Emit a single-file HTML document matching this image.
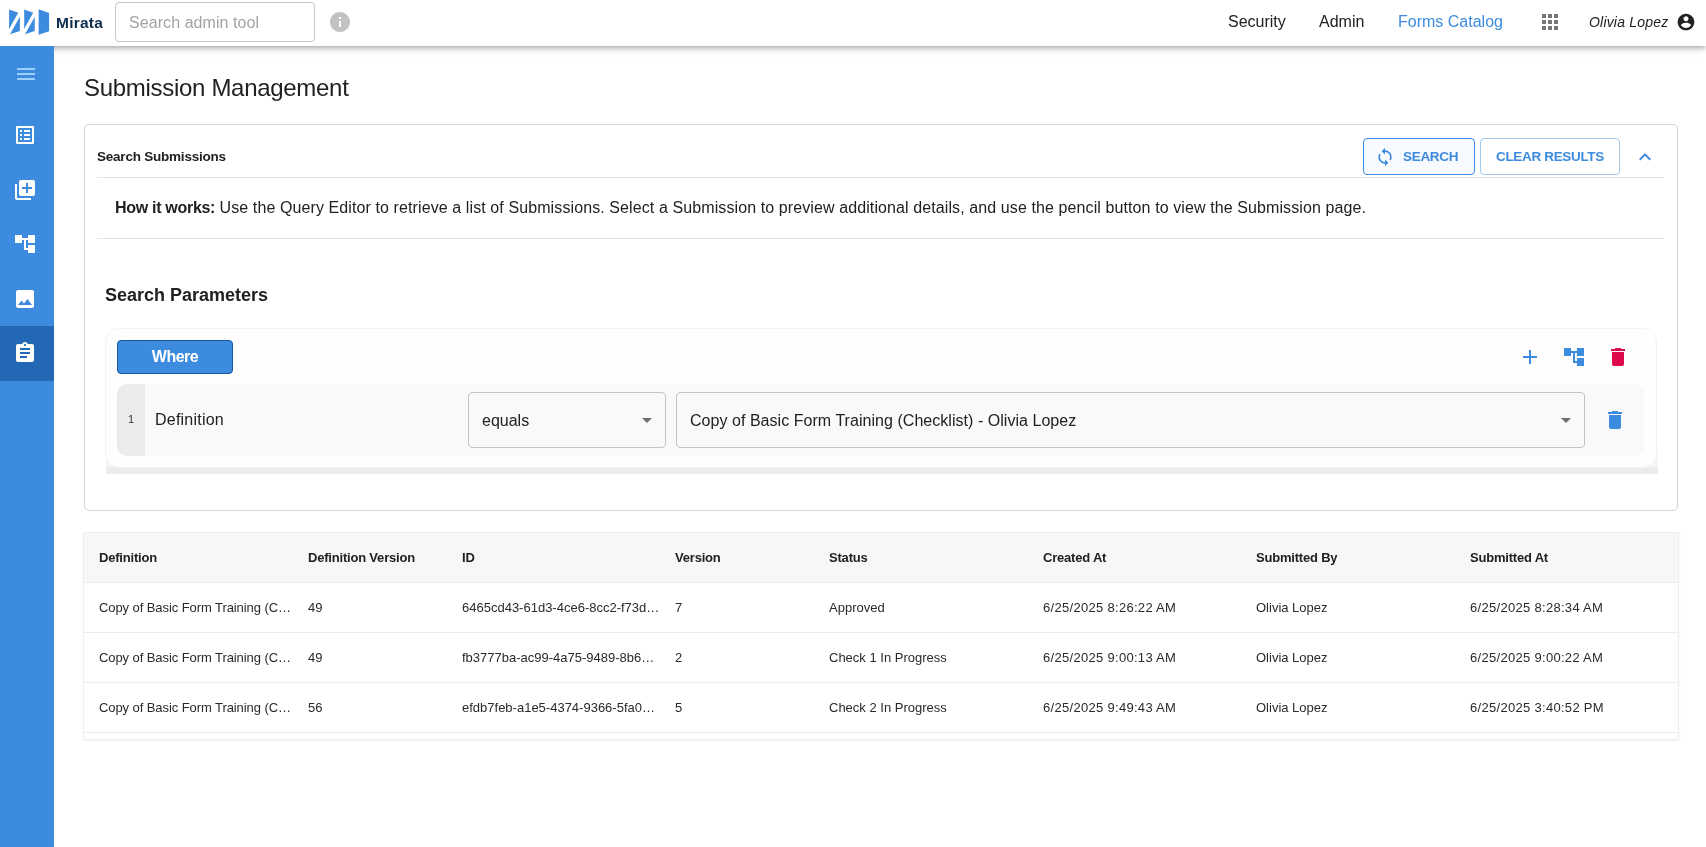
<!DOCTYPE html>
<html lang="en">
<head>
<meta charset="utf-8">
<title>Submission Management</title>
<style>
*{box-sizing:border-box;margin:0;padding:0}
html,body{width:1706px;height:847px;overflow:hidden;background:#fff}
body{font-family:"Liberation Sans",sans-serif;color:#212121;position:relative;font-size:16px}
.abs{position:absolute;white-space:nowrap}
div.abs,.c{will-change:transform}
svg{display:block}

/* header */
#hdr{position:absolute;left:0;top:0;width:1706px;height:46px;background:#fff;box-shadow:0 2px 4px -1px rgba(0,0,0,.2),0 4px 5px 0 rgba(0,0,0,.10),0 1px 10px 0 rgba(0,0,0,.12);z-index:5}
#side{position:absolute;left:0;top:46px;width:54px;height:801px;background:#3d8bdf;z-index:6}
.sact{position:absolute;left:0;top:280px;width:54px;height:54.5px;background:#2268b4}
.sic{position:absolute;left:13px;width:24px;height:24px;fill:#fff}
.search{position:absolute;left:115px;top:2px;width:200px;height:40px;border:1px solid #c6c6c6;border-radius:4px;background:#fff}
.nav{font-size:16px;line-height:20px;top:12px;color:#212121}

/* panel */
#panel{position:absolute;left:84px;top:124px;width:1594px;height:387px;border:1px solid #d4d4d4;border-radius:5px;background:#fff}
.hr{position:absolute;height:1px;background:#e4e4e4}
.btn{position:absolute;top:138px;height:37px;border-radius:4px;font-weight:bold;font-size:14px;color:#3d8bdf}

/* table */
#tbl{position:absolute;left:83px;top:532px;width:1596px;height:208px;background:#fff;border:1px solid #eeeeee;box-shadow:0 1px 2px rgba(0,0,0,.06)}
.th{position:absolute;left:0;top:0;width:100%;height:50px;background:#f7f7f7;border-bottom:1px solid #ebebeb}
.rl{position:absolute;left:0;width:100%;height:1px;background:#ececec}
.c{position:absolute;white-space:nowrap;font-size:13px;line-height:16px;color:#2a2a2a}
.h{font-weight:bold;color:#212121;letter-spacing:-.2px}
.d{letter-spacing:.3px}
.n{letter-spacing:-.08px}
</style>
</head>
<body>

<!-- HEADER -->
<div id="hdr">
  <svg class="abs" style="left:8px;top:8px" width="44" height="30" viewBox="0 0 44 30">
    <g fill="#3d8bdf">
      <polygon points="1.100,1.500 11.900,5.300 11.900,23 1.100,26.600"/>
      <polygon points="16.200,1.500 26.700,5.300 26.700,23 16.200,26.600"/>
      <polygon points="30.650,1.300 41.100,5.100 41.100,23.200 30.650,26.700"/>
    </g>
    <g stroke="#fff" stroke-width="3.400" fill="none">
      <line x1="14.800" y1="0" x2="-1.420" y2="29"/>
      <line x1="29.800" y1="0" x2="13.580" y2="29"/>
    </g>
  </svg>
  <div class="abs" id="t_logo" style="left:55.500px;top:13.300px;letter-spacing:.25px;font-size:15.500px;line-height:20px;font-weight:bold;color:#0b2d4e">Mirata</div>
  <div class="search"></div>
  <div class="abs" id="t_search" style="left:129px;top:13px;letter-spacing:.07px;font-size:16px;line-height:20px;color:#a3a3a3">Search admin tool</div>
  <svg class="abs" style="left:328px;top:10px" width="24" height="24" viewBox="0 0 24 24"><path fill="#c2c2c2" d="M12 2C6.48 2 2 6.48 2 12s4.48 10 10 10 10-4.480 10-10S17.520 2 12 2zm1 15h-2v-6h2v6zm0-8h-2V7h2v2z"/></svg>

  <div class="abs nav" id="t_sec" style="left:1228px">Security</div>
  <div class="abs nav" id="t_adm" style="left:1318.500px">Admin</div>
  <div class="abs nav" id="t_fc" style="left:1397.500px;color:#3d8bdf">Forms Catalog</div>
  <svg class="abs" style="left:1538px;top:10px" width="24" height="24" viewBox="0 0 24 24"><path fill="#757575" d="M4 8h4V4H4v4zm6 12h4v-4h-4v4zm-6 0h4v-4H4v4zm0-6h4v-4H4v4zm6 0h4v-4h-4v4zm6-10v4h4V4h-4zm-6 4h4V4h-4v4zm6 6h4v-4h-4v4zm0 6h4v-4h-4v4z"/></svg>
  <div class="abs" id="t_user" style="left:1589px;top:12px;letter-spacing:.19px;font-size:14px;line-height:20px;font-style:italic;color:#212121">Olivia Lopez</div>
  <svg class="abs" style="left:1676px;top:12px" width="20" height="20" viewBox="0 0 24 24"><path fill="#222" d="M12 2C6.48 2 2 6.48 2 12s4.48 10 10 10 10-4.480 10-10S17.520 2 12 2zm0 3c1.660 0 3 1.340 3 3s-1.340 3-3 3-3-1.340-3-3 1.340-3 3-3zm0 14.200c-2.500 0-4.710-1.280-6-3.220.030-1.990 4-3.080 6-3.080 1.990 0 5.970 1.090 6 3.080-1.290 1.940-3.500 3.220-6 3.220z"/></svg>
</div>

<!-- SIDEBAR -->
<div id="side">
  <div class="sact"></div>
  <svg class="sic" style="left:14px;top:16px;fill:#9dd0ff" viewBox="0 0 24 24"><path d="M3 18h18v-2H3v2zm0-5h18v-2H3v2zm0-7v2h18V6H3z"/></svg>
  <svg class="sic" style="top:77px" viewBox="0 0 24 24"><path d="M19 5v14H5V5h14m1.100-2H3.900c-.5 0-.9.400-.9.900v16.200c0 .4.400.9.900.9h16.200c.4 0 .9-.5.900-.9V3.900c0-.5-.5-.9-.9-.9zM11 7h6v2h-6V7zm0 4h6v2h-6v-2zm0 4h6v2h-6zM7 7h2v2H7zm0 4h2v2H7zm0 4h2v2H7z"/></svg>
  <svg class="sic" style="top:132px" viewBox="0 0 24 24"><path d="M4 6H2v14c0 1.100.9 2 2 2h14v-2H4V6zm16-4H8c-1.100 0-2 .9-2 2v12c0 1.100.9 2 2 2h12c1.100 0 2-.9 2-2V4c0-1.100-.9-2-2-2zm-1 9h-4v4h-2v-4H9V9h4V5h2v4h4v2z"/></svg>
  <svg class="sic" style="top:186px" viewBox="0 0 24 24"><path d="M22 11V3h-7v3H9V3H2v8h7V8h2v10h4v3h7v-8h-7v3h-2V8h2v3z"/></svg>
  <svg class="sic" style="top:241px" viewBox="0 0 24 24"><path d="M21 19V5c0-1.100-.9-2-2-2H5c-1.100 0-2 .9-2 2v14c0 1.100.9 2 2 2h14c1.100 0 2-.9 2-2zM8.500 13.500l2.500 3.010L14.500 12l4.500 6H5l3.500-4.500z"/></svg>
  <svg class="sic" style="top:295px" viewBox="0 0 24 24"><path d="M19 3h-4.180C14.400 1.840 13.300 1 12 1c-1.300 0-2.400.840-2.820 2H5c-1.100 0-2 .9-2 2v14c0 1.100.9 2 2 2h14c1.100 0 2-.9 2-2V5c0-1.100-.9-2-2-2zm-7 0c.550 0 1 .450 1 1s-.450 1-1 1-1-.450-1-1 .450-1 1-1zm2 14H7v-2h7v2zm3-4H7v-2h10v2zm0-4H7V7h10v2z"/></svg>
</div>

<!-- TITLE -->
<div class="abs" id="t_title" style="left:84px;top:71.500px;font-size:24px;line-height:32px;letter-spacing:-.3px;color:#212121">Submission Management</div>

<!-- PANEL -->
<div id="panel"></div>
<div class="abs" id="t_ss" style="left:97px;top:148px;font-size:13.500px;line-height:18px;font-weight:bold;letter-spacing:-.22px;color:#212121">Search Submissions</div>

<div class="btn" style="left:1363px;width:112px;border:1px solid #3d8bdf;background:#f7fafe"></div>
<svg class="abs" style="left:1375px;top:147px" width="20" height="20" viewBox="0 0 24 24"><path fill="#3d8bdf" d="M12 4V1L8 5l4 4V6c3.310 0 6 2.690 6 6 0 1.010-.250 1.970-.7 2.800l1.460 1.460C19.540 15.030 20 13.570 20 12c0-4.420-3.580-8-8-8zm0 14c-3.310 0-6-2.690-6-6 0-1.010.250-1.970.7-2.800L5.240 7.740C4.460 8.970 4 10.430 4 12c0 4.420 3.580 8 8 8v3l4-4-4-4v3z"/></svg>
<div class="abs" id="t_sbtn" style="left:1403px;top:148px;font-size:13.500px;line-height:18px;font-weight:bold;color:#3d8bdf;letter-spacing:-.3px">SEARCH</div>
<div class="btn" style="left:1480px;width:140px;border:1px solid #a5c8ef;background:#fff"></div>
<div class="abs" id="t_cbtn" style="left:1496px;top:148px;font-size:13.500px;line-height:18px;font-weight:bold;color:#3d8bdf;letter-spacing:-.33px">CLEAR RESULTS</div>
<svg class="abs" style="left:1633px;top:145px" width="24" height="24" viewBox="0 0 24 24"><path fill="#3d8bdf" d="M7.410 15.410L12 10.830l4.590 4.580L18 14l-6-6-6 6z"/></svg>

<div class="hr" style="left:97px;top:177px;width:1567px"></div>
<div class="abs" id="t_how" style="left:115px;top:198px;font-size:16px;line-height:20px;color:#212121"><b id="t_howb" style="letter-spacing:-.3px">How it works:</b> <span id="t_hown" style="letter-spacing:.1px">Use the Query Editor to retrieve a list of Submissions. Select a Submission to preview additional details, and use the pencil button to view the Submission page.</span></div>
<div class="hr" style="left:97px;top:238px;width:1567px"></div>

<div class="abs" id="t_sp" style="left:105px;top:284px;font-size:18px;line-height:22px;font-weight:bold;color:#212121">Search Parameters</div>

<!-- query builder -->
<div class="abs" style="left:105.500px;top:452px;width:1551.500px;height:15px;background:#f5f5f5"></div>
<div class="abs" style="left:105.500px;top:467px;width:1551.500px;height:7px;background:#ececec"></div>
<div class="abs" style="left:105px;top:328px;width:1552px;height:139.500px;background:#fefefe;border-radius:14px;border:1px solid #f3f3f3"></div>
<div class="abs" style="left:117px;top:340px;width:116px;height:34px;background:#3d8bdf;border:1px solid #15569f;border-radius:4px"></div>
<div class="abs" id="t_where" style="left:117px;top:347px;width:116px;text-align:center;letter-spacing:-.5px;font-size:16px;line-height:20px;font-weight:bold;color:#fff">Where</div>

<svg class="abs" style="left:1518px;top:345px" width="24" height="24" viewBox="0 0 24 24"><path fill="#3d8bdf" d="M19 13h-6v6h-2v-6H5v-2h6V5h2v6h6v2z"/></svg>
<svg class="abs" style="left:1562px;top:345px" width="24" height="24" viewBox="0 0 24 24"><path fill="#3d8bdf" d="M22 11V3h-7v3H9V3H2v8h7V8h2v10h4v3h7v-8h-7v3h-2V8h2v3z"/></svg>
<svg class="abs" style="left:1606px;top:345px" width="24" height="24" viewBox="0 0 24 24"><path fill="#dc0a4b" d="M6 19c0 1.100.9 2 2 2h8c1.100 0 2-.9 2-2V7H6v12zM19 4h-3.500l-1-1h-5l-1 1H5v2h14V4z"/></svg>

<div class="abs" style="left:117px;top:384px;width:1527px;height:72px;background:#f9f9f9;border-radius:10px"></div>
<div class="abs" style="left:117px;top:384px;width:28px;height:72px;background:#ebebeb;border-radius:10px 0 0 10px"></div>
<div class="abs" id="t_idx" style="left:117px;top:412px;width:28px;text-align:center;font-size:11px;line-height:14px;color:#333">1</div>
<div class="abs" id="t_def" style="left:155px;top:410px;letter-spacing:.23px;font-size:16px;line-height:20px;color:#212121">Definition</div>

<div class="abs" style="left:468px;top:392px;width:198px;height:56px;border:1px solid #c4c4c4;border-radius:4px"></div>
<div class="abs" id="t_eq" style="left:482px;top:411px;font-size:16px;line-height:20px;color:#212121">equals</div>
<svg class="abs" style="left:635px;top:408px" width="24" height="24" viewBox="0 0 24 24"><path fill="#6f6f6f" d="M7 10l5 5 5-5z"/></svg>

<div class="abs" style="left:676px;top:392px;width:909px;height:56px;border:1px solid #c4c4c4;border-radius:4px"></div>
<div class="abs" id="t_val" style="left:690px;top:411px;letter-spacing:.04px;font-size:16px;line-height:20px;color:#212121">Copy of Basic Form Training (Checklist) - Olivia Lopez</div>
<svg class="abs" style="left:1554px;top:408px" width="24" height="24" viewBox="0 0 24 24"><path fill="#6f6f6f" d="M7 10l5 5 5-5z"/></svg>
<svg class="abs" style="left:1603px;top:408px" width="24" height="24" viewBox="0 0 24 24"><path fill="#3d8bdf" d="M6 19c0 1.100.9 2 2 2h8c1.100 0 2-.9 2-2V7H6v12zM19 4h-3.500l-1-1h-5l-1 1H5v2h14V4z"/></svg>

<!-- TABLE -->
<div id="tbl">
  <div class="th"></div>
  <div class="rl" style="top:99px"></div>
  <div class="rl" style="top:149px"></div>
  <div class="rl" style="top:199px"></div>

  <div class="c h" id="h1" style="left:15px;top:17px">Definition</div>
  <div class="c h" id="h2" style="left:223.5px;top:17px">Definition Version</div>
  <div class="c h" id="h3" style="left:378px;top:17px">ID</div>
  <div class="c h" id="h4" style="left:591px;top:17px">Version</div>
  <div class="c h" id="h5" style="left:745px;top:17px">Status</div>
  <div class="c h" id="h6" style="left:958.5px;top:17px">Created At</div>
  <div class="c h" id="h7" style="left:1172px;top:17px">Submitted By</div>
  <div class="c h" id="h8" style="left:1385.5px;top:17px">Submitted At</div>

  <div class="c n" id="r1a" style="left:15px;top:67px">Copy of Basic Form Training (C…</div>
  <div class="c" id="r1b" style="left:223.5px;top:67px">49</div>
  <div class="c" id="r1c" style="left:378px;top:67px">6465cd43-61d3-4ce6-8cc2-f73d…</div>
  <div class="c" id="r1d" style="left:591px;top:67px">7</div>
  <div class="c" id="r1e" style="left:745px;top:67px">Approved</div>
  <div class="c d" id="r1f" style="left:958.5px;top:67px">6/25/2025 8:26:22 AM</div>
  <div class="c" id="r1g" style="left:1172px;top:67px">Olivia Lopez</div>
  <div class="c d" id="r1h" style="left:1385.5px;top:67px">6/25/2025 8:28:34 AM</div>

  <div class="c n" id="r2a" style="left:15px;top:117px">Copy of Basic Form Training (C…</div>
  <div class="c" id="r2b" style="left:223.5px;top:117px">49</div>
  <div class="c" id="r2c" style="left:378px;top:117px">fb3777ba-ac99-4a75-9489-8b6…</div>
  <div class="c" id="r2d" style="left:591px;top:117px">2</div>
  <div class="c" id="r2e" style="left:745px;top:117px">Check 1 In Progress</div>
  <div class="c d" id="r2f" style="left:958.5px;top:117px">6/25/2025 9:00:13 AM</div>
  <div class="c" id="r2g" style="left:1172px;top:117px">Olivia Lopez</div>
  <div class="c d" id="r2h" style="left:1385.5px;top:117px">6/25/2025 9:00:22 AM</div>

  <div class="c n" id="r3a" style="left:15px;top:167px">Copy of Basic Form Training (C…</div>
  <div class="c" id="r3b" style="left:223.5px;top:167px">56</div>
  <div class="c" id="r3c" style="left:378px;top:167px">efdb7feb-a1e5-4374-9366-5fa0…</div>
  <div class="c" id="r3d" style="left:591px;top:167px">5</div>
  <div class="c" id="r3e" style="left:745px;top:167px">Check 2 In Progress</div>
  <div class="c d" id="r3f" style="left:958.5px;top:167px">6/25/2025 9:49:43 AM</div>
  <div class="c" id="r3g" style="left:1172px;top:167px">Olivia Lopez</div>
  <div class="c d" id="r3h" style="left:1385.5px;top:167px">6/25/2025 3:40:52 PM</div>
</div>

</body>
</html>
